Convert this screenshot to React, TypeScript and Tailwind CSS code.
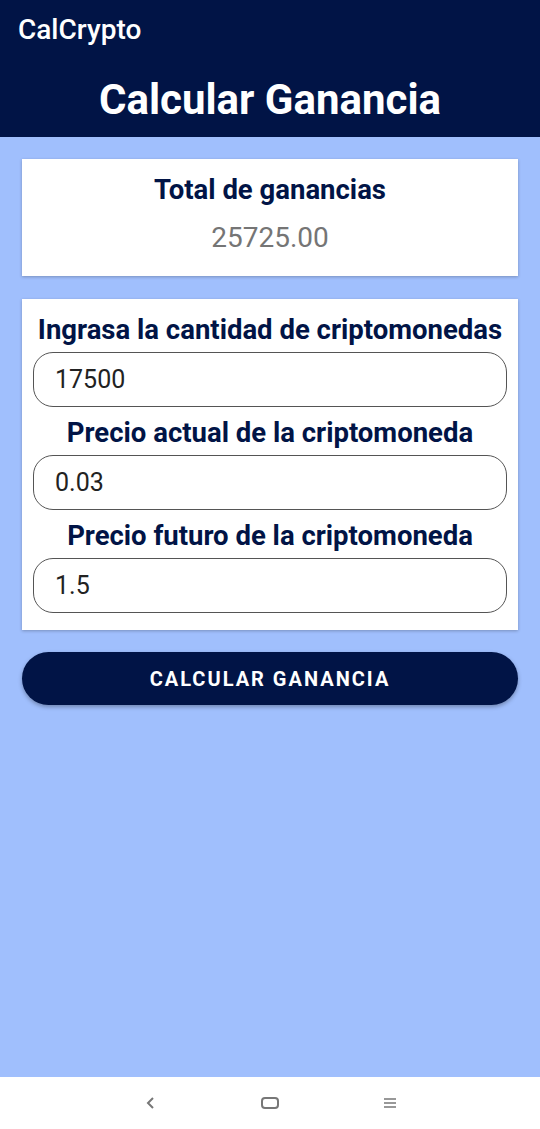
export default function App() {
  const fields = [
    { label: 'Ingrasa la cantidad de criptomonedas', value: '17500' },
    { label: 'Precio actual de la criptomoneda', value: '0.03' },
    { label: 'Precio futuro de la criptomoneda', value: '1.5' },
  ];

  return (
    <div className="flex h-[1129px] w-[540px] flex-col bg-[#a0bffd] font-['Roboto',sans-serif]">
      <div className="flex h-[59px] items-center bg-[#011446] px-[18px] shadow-[0_1px_2px_rgba(0,0,0,0.3)]">
        <span className="text-[28px] font-medium text-white">CalCrypto</span>
      </div>
      <div className="flex h-[78px] items-center justify-center bg-[#011446] pt-[3px]">
        <h1 className="text-[42px] font-bold text-white">Calcular Ganancia</h1>
      </div>

      <div className="flex flex-1 flex-col px-[22px] pt-[22px]">
        <div className="flex h-[117px] flex-col items-center bg-white pt-[15px] shadow-[0_1px_3px_rgba(0,0,0,0.25)]">
          <h2 className="text-[27.5px] font-bold leading-[32px] text-[#011446]">Total de ganancias</h2>
          <p className="mt-[15px] text-[28px] leading-[34px] text-[#757575]">25725.00</p>
        </div>

        <div className="mt-[23px] flex flex-col bg-white px-[11px] pt-[15px] pb-[17px] shadow-[0_1px_3px_rgba(0,0,0,0.25)]">
          {fields.map((f, i) => (
            <div key={i} className={i > 0 ? 'mt-[10px]' : ''}>
              <label className="block text-center text-[27.5px] font-bold leading-[32px] whitespace-nowrap text-[#011446]">
                {f.label}
              </label>
              <div className="mt-[6px] flex h-[55px] items-center rounded-[20px] border border-[#555] px-[21px] text-[25px] text-[#222]">
                {f.value}
              </div>
            </div>
          ))}
        </div>

        <button className="mt-[22px] h-[53px] rounded-full bg-[#011446] text-[20px] font-bold tracking-[2px] text-white shadow-[0_2px_4px_rgba(0,0,0,0.3)]">
          CALCULAR GANANCIA
        </button>
      </div>

      <div className="flex h-[52px] items-center justify-center gap-[80px] bg-white">
        <div className="flex w-[40px] justify-center">
          <svg width="14" height="20" viewBox="0 0 14 20" fill="none" stroke="#777" strokeWidth="2">
            <path d="M10 5 L5 10 L10 15" />
          </svg>
        </div>
        <div className="flex w-[40px] justify-center">
          <svg width="20" height="16" viewBox="0 0 20 16" fill="none" stroke="#777" strokeWidth="2">
            <rect x="2" y="3" width="16" height="10" rx="3" />
          </svg>
        </div>
        <div className="flex w-[40px] justify-center">
          <svg width="16" height="16" viewBox="0 0 16 16" fill="none" stroke="#777" strokeWidth="1.6">
            <path d="M2 4 H14 M2 8 H14 M2 12 H14" />
          </svg>
        </div>
      </div>
    </div>
  );
}
